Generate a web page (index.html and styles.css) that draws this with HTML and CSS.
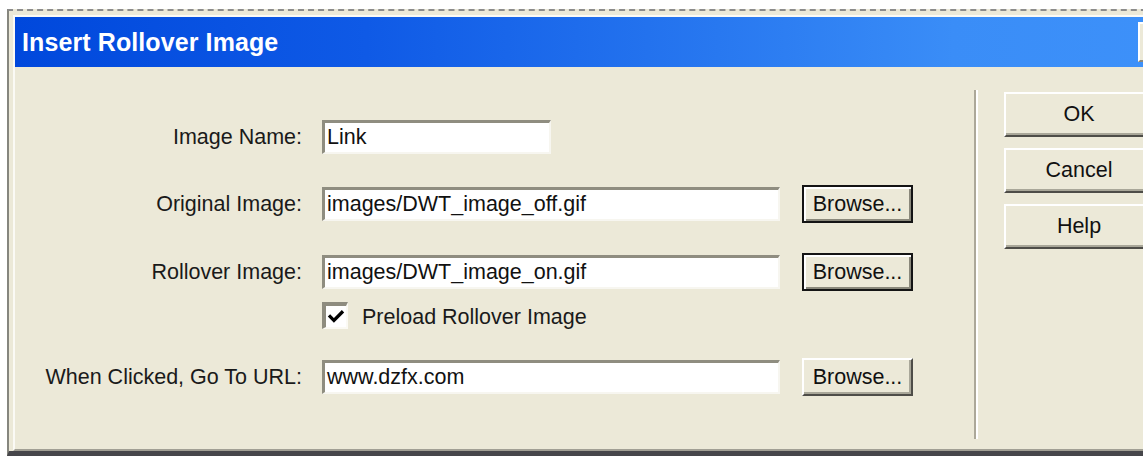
FILE: index.html
```html
<!DOCTYPE html>
<html lang="en">
<head>
<meta charset="utf-8">
<title>Insert Rollover Image</title>
<link rel="stylesheet" href="styles.css">
</head>
<body>
<div class="window">
  <div class="frame">
    <div class="titlebar">
      <span class="title">Insert Rollover Image</span>
      <span class="tb-btn"></span>
    </div>
    <div class="dialog-body">
      <div class="form">
        <div class="row row-name">
          <span class="lbl">Image Name:</span>
          <div class="field field-short">Link</div>
        </div>
        <div class="row row-original">
          <span class="lbl">Original Image:</span>
          <div class="field">images/DWT_image_off.gif</div>
          <button class="btn browse is-default">Browse...</button>
        </div>
        <div class="row row-rollover">
          <span class="lbl">Rollover Image:</span>
          <div class="field">images/DWT_image_on.gif</div>
          <button class="btn browse is-default">Browse...</button>
        </div>
        <div class="row row-preload">
          <span></span>
          <div class="check">
            <span class="box"><svg viewBox="0 0 24 24" width="24" height="24"><path d="M5 11.5 L9.5 16 L19 6.5" fill="none" stroke="#000" stroke-width="4" stroke-linecap="square"/></svg></span>
            <span class="check-text">Preload Rollover Image</span>
          </div>
        </div>
        <div class="row row-url">
          <span class="lbl">When Clicked, Go To URL:</span>
          <div class="field">www.dzfx.com</div>
          <button class="btn browse">Browse...</button>
        </div>
      </div>
      <div class="sep"></div>
      <div class="actions">
        <button class="btn action">OK</button>
        <button class="btn action">Cancel</button>
        <button class="btn action">Help</button>
      </div>
    </div>
  </div>
</div>
</body>
</html>
```
FILE: styles.css
```css
html, body {
  margin: 0;
  padding: 0;
  background: #ffffff;
  overflow: hidden;
}

body {
  font-family: "Liberation Sans", Arial, sans-serif;
  font-size: 21.5px;
  color: #1a1a1a;
}

/* outer window edge */
.window {
  box-sizing: border-box;
  margin: 9px 0 0 7px;
  width: 1180px;
  height: 447px;
  border-top: 2px dashed #8c8c8c;
  border-left: 2px solid #86867e;
  border-bottom: 5px solid #46464a;
  background: #ece9d8;
  padding: 4px 0 0 4px;
}

.frame {
  box-sizing: border-box;
  height: 100%;
  display: flex;
  flex-direction: column;
  border-top: 2px solid #fbfaf5;
  border-left: 2px solid #fbfaf5;
  border-bottom: 2px solid #a19f94;
}

/* caption bar */
.titlebar {
  flex: 0 0 50px;
  display: flex;
  align-items: center;
  background: linear-gradient(to right, #0048dc 0%, #0f5ae6 30%, #2878f0 60%, #3a8df7 80%, #3d91fa 100%);
}

.title {
  padding-left: 7px;
  color: #ffffff;
  font-weight: bold;
  font-size: 25px;
  letter-spacing: 0.1px;
}

.tb-btn {
  box-sizing: border-box;
  margin-left: auto;
  margin-right: 17px;
  width: 32px;
  height: 40px;
  background: #ece9d8;
  border-top: 2px solid #ffffff;
  border-left: 2px solid #ffffff;
  border-bottom: 2px solid #8a887c;
}

/* content area */
.dialog-body {
  flex: 1;
  display: flex;
}

.form {
  width: 959px;
  padding-top: 51px;
  display: flex;
  flex-direction: column;
}

.row {
  display: grid;
  grid-template-columns: 287px 458px 113px;
  column-gap: 20px;
  align-items: center;
  height: 38px;
}

.row-original { margin-top: 29px; }
.row-rollover { margin-top: 30px; }
.row-preload { margin-top: 10px; height: 28px; }
.row-url { margin-top: 29px; }

.lbl {
  justify-self: end;
  white-space: nowrap;
}

/* sunken text field */
.field {
  box-sizing: border-box;
  height: 34px;
  display: flex;
  align-items: center;
  padding-left: 2px;
  background: #ffffff;
  border-top: 3px solid #8f8d80;
  border-left: 3px solid #8f8d80;
  border-bottom: 2px solid #f7f6f0;
  border-right: 2px solid #f7f6f0;
  white-space: nowrap;
  color: #111111;
}

.field-short {
  width: 229px;
}

/* raised push buttons */
.btn {
  box-sizing: border-box;
  padding: 0;
  margin: 0;
  font-family: inherit;
  font-size: 21.5px;
  color: #111111;
  background: #ece9d8;
  border-top: 2px solid #ffffff;
  border-left: 2px solid #ffffff;
  border-bottom: 2px solid #4e4d48;
  border-right: 2px solid #4e4d48;
  box-shadow: inset -2px -2px 0 #a9a799;
  appearance: none;
  cursor: default;
}

.browse {
  margin-left: 2px;
  width: 111px;
  height: 38px;
  padding-top: 1px;
}

.browse.is-default {
  border: 2px solid #141414;
  box-shadow: inset 2px 2px 0 #ffffff, inset -2px -2px 0 #8a887b;
}

/* checkbox */
.check {
  display: flex;
  align-items: center;
}

.box {
  box-sizing: border-box;
  width: 26px;
  height: 27px;
  display: flex;
  align-items: center;
  justify-content: center;
  background: #ffffff;
  border-top: 4px solid #8e8c7f;
  border-left: 4px solid #8e8c7f;
  border-bottom: 2px solid #fbfaf4;
  border-right: 2px solid #fbfaf4;
}

.box svg {
  width: 20px;
  height: 20px;
}

.check-text {
  margin-left: 14px;
  padding-top: 4px;
}

/* etched divider */
.sep {
  width: 0;
  margin: 23px 0 10px;
  border-left: 2px solid #aca899;
  border-right: 2px solid #ffffff;
}

.actions {
  margin-left: 26px;
  padding-top: 25px;
  display: flex;
  flex-direction: column;
  gap: 11px;
}

.action {
  width: 150px;
  height: 45px;
  padding-left: 0;
  padding-right: 0;
}
```
